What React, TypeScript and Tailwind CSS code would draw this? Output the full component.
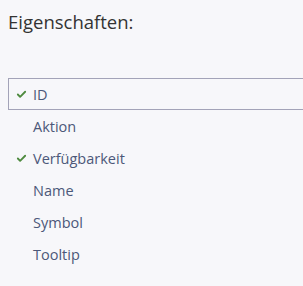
import { Check } from 'lucide-react'

const items = [
  { label: 'ID', checked: true, focused: true },
  { label: 'Aktion', checked: false },
  { label: 'Verfügbarkeit', checked: true },
  { label: 'Name', checked: false },
  { label: 'Symbol', checked: false },
  { label: 'Tooltip', checked: false },
]

export default function App() {
  return (
    <div className="h-[286px] w-[303px] bg-[#f7f7fa] pt-[10px] font-['Open_Sans',sans-serif]">
      <h2 className="pl-[8px] text-[18.5px] leading-[24px] text-[#333333]">Eigenschaften:</h2>
      <ul className="mt-[44px] pl-[8px]">
        {items.map((it) => (
          <li
            key={it.label}
            className={
              'flex h-[32px] items-center border pt-[1px] text-[14.5px] text-[#4c5879] ' +
              (it.focused ? 'border-[#a3a3b8] border-r-0' : 'border-transparent')
            }
          >
            <span className="flex w-[24px] justify-center">
              {it.checked && <Check size={11} strokeWidth={4} className="text-[#4e8a3e]" />}
            </span>
            <span>{it.label}</span>
          </li>
        ))}
      </ul>
    </div>
  )
}
